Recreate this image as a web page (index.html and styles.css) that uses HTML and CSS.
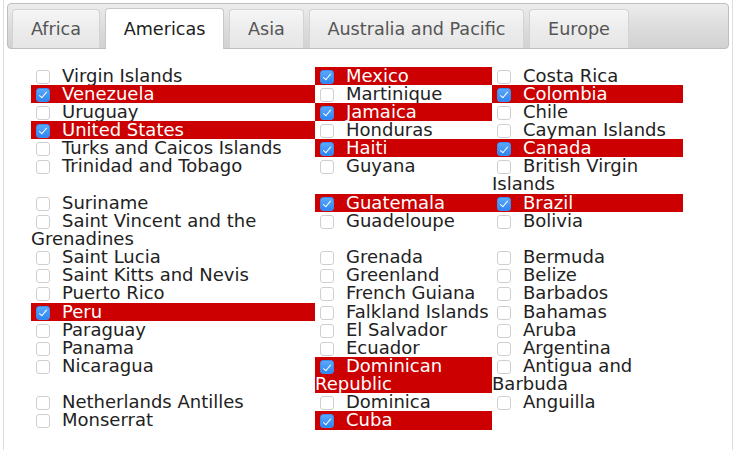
FILE: index.html
```html
<!DOCTYPE html>
<html>
<head>
<meta charset="utf-8">
<link rel="stylesheet" href="styles.css">
</head>
<body>
<div class="widget">
  <ul class="nav">
    <li class="tab">Africa</li>
    <li class="tab active">Americas</li>
    <li class="tab">Asia</li>
    <li class="tab">Australia and Pacific</li>
    <li class="tab">Europe</li>
  </ul>
  <div class="panel">
    <div class="grid">
      <div class="cell"><span class="box"></span>Virgin Islands</div>
      <div class="cell on"><span class="box checked"></span>Mexico</div>
      <div class="cell"><span class="box"></span>Costa Rica</div>

      <div class="cell on"><span class="box checked"></span>Venezuela</div>
      <div class="cell"><span class="box"></span>Martinique</div>
      <div class="cell on"><span class="box checked"></span>Colombia</div>

      <div class="cell"><span class="box"></span>Uruguay</div>
      <div class="cell on"><span class="box checked"></span>Jamaica</div>
      <div class="cell"><span class="box"></span>Chile</div>

      <div class="cell on"><span class="box checked"></span>United States</div>
      <div class="cell"><span class="box"></span>Honduras</div>
      <div class="cell"><span class="box"></span>Cayman Islands</div>

      <div class="cell"><span class="box"></span>Turks and Caicos Islands</div>
      <div class="cell on"><span class="box checked"></span>Haiti</div>
      <div class="cell on"><span class="box checked"></span>Canada</div>

      <div class="cell"><span class="box"></span>Trinidad and Tobago</div>
      <div class="cell"><span class="box"></span>Guyana</div>
      <div class="cell"><span class="box"></span>British Virgin Islands</div>

      <div class="cell"><span class="box"></span>Suriname</div>
      <div class="cell on"><span class="box checked"></span>Guatemala</div>
      <div class="cell on"><span class="box checked"></span>Brazil</div>

      <div class="cell"><span class="box"></span>Saint Vincent and the Grenadines</div>
      <div class="cell"><span class="box"></span>Guadeloupe</div>
      <div class="cell"><span class="box"></span>Bolivia</div>

      <div class="cell"><span class="box"></span>Saint Lucia</div>
      <div class="cell"><span class="box"></span>Grenada</div>
      <div class="cell"><span class="box"></span>Bermuda</div>

      <div class="cell"><span class="box"></span>Saint Kitts and Nevis</div>
      <div class="cell"><span class="box"></span>Greenland</div>
      <div class="cell"><span class="box"></span>Belize</div>

      <div class="cell"><span class="box"></span>Puerto Rico</div>
      <div class="cell"><span class="box"></span>French Guiana</div>
      <div class="cell"><span class="box"></span>Barbados</div>

      <div class="cell on"><span class="box checked"></span>Peru</div>
      <div class="cell"><span class="box"></span>Falkland Islands</div>
      <div class="cell"><span class="box"></span>Bahamas</div>

      <div class="cell"><span class="box"></span>Paraguay</div>
      <div class="cell"><span class="box"></span>El Salvador</div>
      <div class="cell"><span class="box"></span>Aruba</div>

      <div class="cell"><span class="box"></span>Panama</div>
      <div class="cell"><span class="box"></span>Ecuador</div>
      <div class="cell"><span class="box"></span>Argentina</div>

      <div class="cell"><span class="box"></span>Nicaragua</div>
      <div class="cell on"><span class="box checked"></span>Dominican Republic</div>
      <div class="cell"><span class="box"></span>Antigua and Barbuda</div>

      <div class="cell"><span class="box"></span>Netherlands Antilles</div>
      <div class="cell"><span class="box"></span>Dominica</div>
      <div class="cell"><span class="box"></span>Anguilla</div>

      <div class="cell"><span class="box"></span>Monserrat</div>
      <div class="cell on"><span class="box checked"></span>Cuba</div>
      <div class="cell empty"></div>
    </div>
  </div>
</div>
</body>
</html>
```
FILE: styles.css
```css
html, body {
  margin: 0;
  padding: 0;
  background: #ffffff;
  overflow: hidden;
}

body {
  font-family: "DejaVu Sans", Verdana, sans-serif;
  font-size: 17.6px;
  color: #222222;
}

.widget {
  margin: -1px 0 0 3px;
  width: 722px;
  height: 444px;
  border: 1px solid #dddddd;
  padding: 3px;
}

.nav {
  list-style: none;
  margin: 0;
  padding: 4px 4px 0 4px;
  display: flex;
  gap: 4.8px;
  border: 1px solid #bdbdbd;
  border-radius: 4px;
  background: linear-gradient(to bottom, #ececec 0%, #dcdcdc 55%, #d2d2d2 100%);
}

.tab {
  margin-top: 1px;
  padding: 8.5px 17.9px 8.5px 17.9px;
  line-height: 20.5px;
  color: #555555;
  border: 1px solid #d3d3d3;
  border-bottom: 0;
  border-radius: 4px 4px 0 0;
  background: linear-gradient(to bottom, #f6f6f6 0%, #ececec 50%, #e6e6e6 100%);
}

.tab.active {
  margin-top: 0;
  padding-top: 9.5px;
  margin-bottom: -1px;
  padding-bottom: 9.5px;
  color: #212121;
  background: #ffffff;
  border-color: #c8c8c8;
}

.panel {
  padding: 18px 0 0 24px;
}

.grid {
  display: grid;
  grid-template-columns: 284px 177px 191px;
  font-size: 18px;
  line-height: 18.16px;
}

.cell {
  color: #222222;
}

.cell.on {
  background: #cc0000;
  color: #ffffff;
}

.box {
  display: inline-block;
  box-sizing: border-box;
  width: 14px;
  height: 14px;
  margin: 0 12px 0 5px;
  vertical-align: -2px;
  border: 1px solid #cfcfcf;
  border-radius: 3px;
  background: #ffffff;
  position: relative;
}

.box.checked {
  border-color: #3b8ef0;
  background: linear-gradient(to bottom, #5aa8fb, #2f86f2);
}

.box.checked::after {
  content: "";
  position: absolute;
  left: 4px;
  top: 1.5px;
  width: 3px;
  height: 7px;
  border-right: 1.5px solid #ffffff;
  border-bottom: 1.5px solid #ffffff;
  transform: rotate(40deg);
}
```
